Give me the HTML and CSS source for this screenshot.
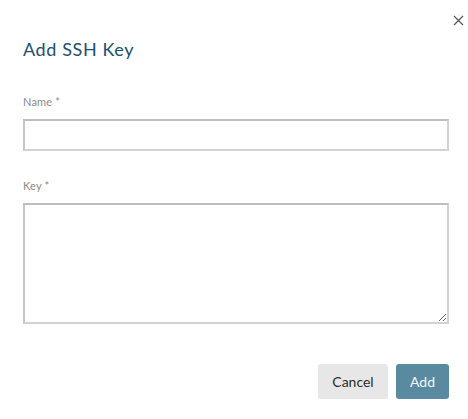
FILE: index.html
```html
<!DOCTYPE html>
<html>
<head>
<meta charset="utf-8">
<link rel="stylesheet" href="styles.css">
</head>
<body>
<div class="dialog">
  <button class="close" aria-label="Close">
    <svg width="11" height="11" viewBox="0 0 11 11"><path d="M1 1L10 10M10 1L1 10" stroke="#555" stroke-width="1.2" fill="none"/></svg>
  </button>
  <h2 class="title">Add SSH Key</h2>
  <div class="field field-name">
    <label class="label">Name *</label>
    <input class="input" type="text">
  </div>
  <div class="field field-key">
    <label class="label">Key *</label>
    <textarea class="textarea"></textarea>
  </div>
  <div class="actions">
    <button class="btn btn-cancel">Cancel</button>
    <button class="btn btn-add">Add</button>
  </div>
</div>
</body>
</html>
```
FILE: styles.css
```css
html, body {
  margin: 0;
  padding: 0;
  background: #fff;
}
body {
  font-family: "Lato", "Noto Sans", sans-serif;
}
.dialog {
  position: relative;
  width: 468px;
  height: 419px;
  box-sizing: border-box;
  padding: 36px 19px 0 23px;
}
.close {
  position: absolute;
  top: 15px;
  right: 4px;
  width: 11px;
  height: 11px;
  padding: 0;
  border: 0;
  background: none;
  display: flex;
}
.title {
  margin: 0;
  font-size: 18px;
  font-weight: 400;
  line-height: 26px;
  color: #1d4f6e;
  letter-spacing: 0.6px;
}
.field {
  display: flex;
  flex-direction: column;
}
.field-name {
  margin-top: 33px;
}
.field-key {
  margin-top: 28px;
}
.label {
  font-size: 11px;
  line-height: 14px;
  color: #8a8a8a;
  margin-bottom: 10px;
  letter-spacing: 0.2px;
}
.input, .textarea {
  box-sizing: border-box;
  width: 100%;
  border: 2px solid #d2d2d2;
  border-top-color: #bdbdbd;
  border-left-color: #c6c6c6;
  background: #fff;
  margin: 0;
  outline: none;
}
.input {
  height: 32px;
}
.textarea {
  height: 121px;
  resize: vertical;
  display: block;
}
.actions {
  display: flex;
  justify-content: flex-end;
  gap: 8px;
  margin-top: 40px;
}
.btn {
  height: 35px;
  border: 0;
  border-radius: 3px;
  font-family: "Lato", "Noto Sans", sans-serif;
  font-size: 14px;
  padding: 0;
}
.btn-cancel {
  width: 70px;
  background: #e7e7e7;
  color: #2b2b2b;
}
.btn-add {
  width: 53px;
  background: #5a8aa0;
  color: #f2f6f8;
}
```
